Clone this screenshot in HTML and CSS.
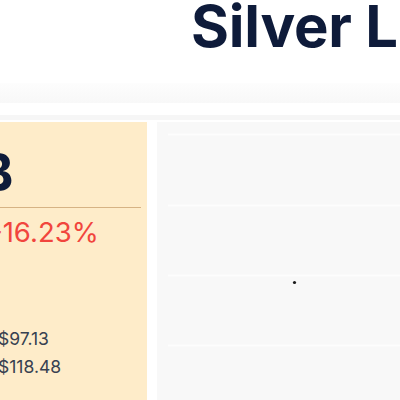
FILE: index.html
```html
<!DOCTYPE html>
<html lang="en">
<head>
<meta charset="utf-8">
<title>Silver Lining</title>
<link rel="stylesheet" href="styles.css">
</head>
<body>
  <header class="top">
    <h1 class="title">Silver Lining Capital</h1>
  </header>
  <div class="band"></div>
  <div class="strip"></div>
  <main class="row">
    <section class="stat-card">
      <div class="big">$12.8B</div>
      <div class="divider"></div>
      <div class="change">-16.23%</div>
      <ul class="prices">
        <li>$97.13</li>
        <li>$118.48</li>
      </ul>
    </section>
    <section class="chart-panel">
      <svg class="chart" width="260" height="280" viewBox="0 0 260 280">
        <line x1="11" y1="12.5" x2="260" y2="12.5" class="grid"/>
        <line x1="11" y1="83.5" x2="260" y2="83.5" class="grid"/>
        <line x1="11" y1="153.5" x2="260" y2="153.5" class="grid"/>
        <line x1="11" y1="223.5" x2="260" y2="223.5" class="grid"/>
        <circle cx="137.5" cy="160.5" r="1.6" class="dot"/>
      </svg>
    </section>
  </main>
</body>
</html>
```
FILE: styles.css
```css
html, body {
  margin: 0;
  padding: 0;
  background: #ffffff;
  overflow: hidden;
  width: 400px;
  height: 400px;
}

body {
  font-family: Inter, "Noto Sans", sans-serif;
}

.top {
  height: 83px;
  padding-left: 191px;
  overflow: hidden;
}

.title {
  margin: 0;
  font-size: 58px;
  line-height: 52px;
  font-weight: 700;
  color: #0e1b3a;
  white-space: nowrap;
  letter-spacing: -0.2px;
}

.band {
  height: 20px;
  background: linear-gradient(to bottom, #fdfdfd, #f8f8f8);
}

.strip {
  height: 5px;
  margin-top: 12px;
  margin-bottom: 2px;
  background: #f6f6f6;
}

.row {
  display: flex;
  gap: 10px;
  margin-left: -150px;
  height: 300px;
}

.stat-card {
  width: 297px;
  flex: none;
  box-sizing: border-box;
  padding: 25px 6px 0 148px;
  background: #feecc9;
}

.big {
  font-size: 52px;
  line-height: 52px;
  font-weight: 700;
  color: #0e1b3a;
  margin-left: -158px;
  white-space: nowrap;
}

.divider {
  height: 1px;
  margin-top: 8px;
  margin-left: -148px;
  background: #d6b384;
}

.change {
  margin-top: 6px;
  font-size: 27.5px;
  line-height: 36px;
  color: #f1453d;
  margin-left: -8px;
  white-space: nowrap;
}

.prices {
  list-style: none;
  margin: 75px 0 0;
  padding: 0;
  font-size: 17.5px;
  line-height: 28px;
  color: #374151;
}

.chart-panel {
  flex: 1;
  background: #f8f8f8;
}

.chart {
  display: block;
}

.grid {
  stroke: #fdfdfd;
  stroke-width: 1.5;
}

.dot {
  fill: #1a1a1a;
}
```
